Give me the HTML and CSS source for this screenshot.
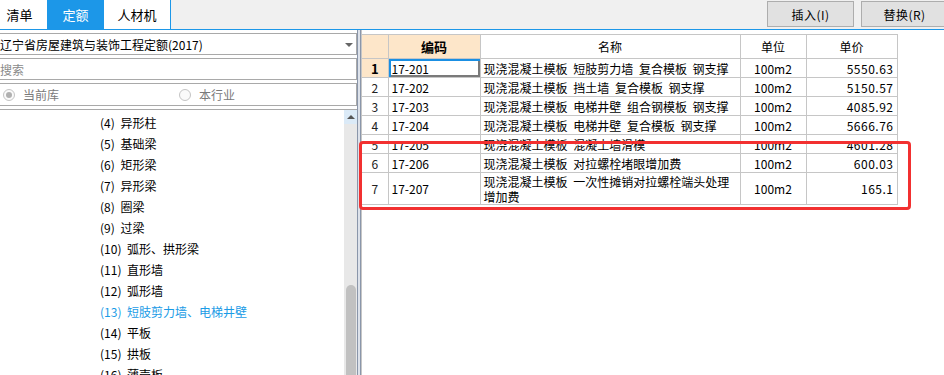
FILE: index.html
```html
<!DOCTYPE html>
<html lang="zh-CN">
<head>
    <meta charset="UTF-8">
    <meta name="viewport" content="width=device-width, initial-scale=1.0">
    <title>定额查询</title>
    <link rel="stylesheet" href="styles.css">
</head>
<body>
    <div class="app">
        <div class="topbar">
            <div class="tabs">
                <div class="tab tab-first">清单</div>
                <div class="tab active">定额</div>
                <div class="tab tab-last">人材机</div>
            </div>
            <div class="actions">
                <button class="btn">插入(I)</button>
                <button class="btn">替换(R)</button>
            </div>
        </div>

        <div class="main">
            <div class="left">
                <div class="select">
                    <span class="select-text">辽宁省房屋建筑与装饰工程定额(2017)</span>
                    <span class="caret"></span>
                </div>
                <div class="search">搜索</div>
                <div class="scope">
                    <span class="radio checked"><span class="circle"></span>当前库</span>
                    <span class="radio"><span class="circle"></span>本行业</span>
                </div>
                <div class="tree">
                    <ul class="tree-list">
                        <li>(4) 异形柱</li>
                        <li>(5) 基础梁</li>
                        <li>(6) 矩形梁</li>
                        <li>(7) 异形梁</li>
                        <li>(8) 圈梁</li>
                        <li>(9) 过梁</li>
                        <li>(10) 弧形、拱形梁</li>
                        <li>(11) 直形墙</li>
                        <li>(12) 弧形墙</li>
                        <li class="current">(13) 短肢剪力墙、电梯井壁</li>
                        <li>(14) 平板</li>
                        <li>(15) 拱板</li>
                        <li>(16) 薄壳板</li>
                    </ul>
                    <div class="scrollbar">
                        <div class="sb-up"></div>
                        <div class="sb-thumb"></div>
                    </div>
                </div>
            </div>

            <div class="splitter"></div>

            <div class="right">
                <table class="grid">
                    <colgroup>
                        <col style="width: 26px">
                        <col style="width: 92px">
                        <col style="width: 260px">
                        <col style="width: 66px">
                        <col style="width: 91px">
                    </colgroup>
                    <thead>
                        <tr>
                            <th class="num peach"></th>
                            <th class="peach code-head">编码</th>
                            <th>名称</th>
                            <th>单位</th>
                            <th>单价</th>
                        </tr>
                    </thead>
                    <tbody>
                        <tr>
                            <td class="num peach cur">1</td>
                            <td class="code focused">17-201</td>
                            <td>现浇混凝土模板 短肢剪力墙 复合模板 钢支撑</td>
                            <td class="unit">100m2</td>
                            <td class="price">5550.63</td>
                        </tr>
                        <tr>
                            <td class="num">2</td>
                            <td class="code">17-202</td>
                            <td>现浇混凝土模板 挡土墙 复合模板 钢支撑</td>
                            <td class="unit">100m2</td>
                            <td class="price">5150.57</td>
                        </tr>
                        <tr>
                            <td class="num">3</td>
                            <td class="code">17-203</td>
                            <td>现浇混凝土模板 电梯井壁 组合钢模板 钢支撑</td>
                            <td class="unit">100m2</td>
                            <td class="price">4085.92</td>
                        </tr>
                        <tr>
                            <td class="num">4</td>
                            <td class="code">17-204</td>
                            <td>现浇混凝土模板 电梯井壁 复合模板 钢支撑</td>
                            <td class="unit">100m2</td>
                            <td class="price">5666.76</td>
                        </tr>
                        <tr>
                            <td class="num">5</td>
                            <td class="code">17-205</td>
                            <td>现浇混凝土模板 混凝土墙滑模</td>
                            <td class="unit">100m2</td>
                            <td class="price">4601.28</td>
                        </tr>
                        <tr>
                            <td class="num">6</td>
                            <td class="code">17-206</td>
                            <td>现浇混凝土模板 对拉螺栓堵眼增加费</td>
                            <td class="unit">100m2</td>
                            <td class="price">600.03</td>
                        </tr>
                        <tr class="tall">
                            <td class="num">7</td>
                            <td class="code">17-207</td>
                            <td class="wrap">现浇混凝土模板 一次性摊销对拉螺栓端头处理<br>增加费</td>
                            <td class="unit">100m2</td>
                            <td class="price">165.1</td>
                        </tr>
                    </tbody>
                </table>
                <div class="highlight"></div>
            </div>
        </div>
    </div>
</body>
</html>
```

FILE: styles.css
```css
body, html {
    margin: 0;
    padding: 0;
    width: 944px;
    height: 375px;
    overflow: hidden;
    background-color: #fff;
    font-family: "Noto Sans CJK SC", "Liberation Sans", sans-serif;
    font-size: 12px;
    color: #000;
    word-spacing: 3px;
}

.app {
    display: flex;
    flex-direction: column;
    height: 375px;
}

/* barre du haut : onglets + boutons */
.topbar {
    display: flex;
    justify-content: space-between;
    height: 29px;
    background-color: #f0f0f0;
    border-bottom: 1px solid #1c97e8;
    flex-shrink: 0;
}

.tabs {
    display: flex;
}

.tab {
    display: flex;
    align-items: center;
    justify-content: center;
    background-color: #fff;
    font-size: 13px;
    width: 57px;
}

.tab-first {
    width: 55px;
    margin-left: -8px;
}

.tab-last {
    width: 66px;
    border-right: 1px solid #1c97e8;
}

.tab.active {
    background-color: #1c97e8;
    color: #fff;
}

.actions {
    display: flex;
    gap: 7px;
    padding-top: 1px;
    margin-right: -4px;
}

.btn {
    width: 87px;
    height: 26px;
    background-color: #e1e1e1;
    border: 1px solid #adadad;
    font-family: inherit;
    font-size: 12px;
    color: #000;
    padding: 0;
    letter-spacing: 0.5px;
}

/* zone principale */
.main {
    display: flex;
    flex: 1;
    min-height: 0;
}

.left {
    width: 359px;
    margin-left: -2px;
    display: flex;
    flex-direction: column;
    gap: 3px;
    padding-top: 3px;
    flex-shrink: 0;
}

.select,
.search,
.scope {
    box-sizing: border-box;
    border: 1px solid #a9a9a9;
    display: flex;
    align-items: center;
    padding-left: 1px;
}

.select {
    height: 22px;
    justify-content: space-between;
}

.caret {
    width: 0;
    height: 0;
    border-left: 4px solid transparent;
    border-right: 4px solid transparent;
    border-top: 4px solid #666;
    margin-right: 3px;
    margin-top: 1px;
}

.search {
    height: 22px;
    color: #8a8a8a;
}

.scope {
    height: 23px;
    padding-left: 4px;
    color: #7a7a7a;
}

.radio {
    display: flex;
    align-items: center;
    gap: 8px;
    width: 176px;
}

.circle {
    box-sizing: border-box;
    width: 12px;
    height: 12px;
    border-radius: 50%;
    border: 1px solid #c4c4c4;
    background-color: #fafafa;
    position: relative;
}

.radio.checked .circle::before {
    content: '';
    position: absolute;
    top: 2px;
    left: 2px;
    width: 6px;
    height: 6px;
    border-radius: 50%;
    background-color: #b0b0b0;
}

.tree {
    flex: 1;
    min-height: 0;
    border-top: 1px solid #a9a9a9;
    display: flex;
    overflow: hidden;
}

.tree-list {
    list-style: none;
    margin: 0;
    padding: 2px 0 0 102px;
    flex: 1;
}

.tree-list li {
    height: 21px;
    line-height: 21px;
    white-space: nowrap;
}

.tree-list li.current {
    color: #1a9be6;
}

.scrollbar {
    width: 13px;
    background-color: #e8e8e8;
    display: flex;
    flex-direction: column;
    align-items: center;
}

.sb-up {
    width: 13px;
    height: 14px;
    background-color: #dbeaf7;
    position: relative;
    flex-shrink: 0;
}

.sb-up::before {
    content: '';
    position: absolute;
    top: 5px;
    left: 3px;
    border-left: 4px solid transparent;
    border-right: 4px solid transparent;
    border-bottom: 4px solid #555;
}

.sb-thumb {
    width: 10px;
    height: 120px;
    margin-top: 161px;
    background-color: #c1c1c1;
    border-radius: 5px 5px 0 0;
    flex-shrink: 0;
}

/* séparateur entre les deux volets */
.splitter {
    width: 2px;
    background-color: #dde2ea;
    border-left: 1px solid #8a96aa;
    border-right: 1px solid #8a96aa;
    flex-shrink: 0;
}

.right {
    flex: 1;
    position: relative;
    border-left: 1px solid #c6c6c6;
    padding-top: 4px;
}

.grid {
    border-collapse: collapse;
    table-layout: fixed;
    width: 535px;
    font-size: 12px;
}

.grid th,
.grid td {
    border: 1px solid #c6c6c6;
    padding: 0 3px;
    white-space: nowrap;
    overflow: hidden;
    line-height: 15px;
}

.grid th:first-child,
.grid td:first-child {
    border-left: none;
}

.grid thead tr {
    height: 24px;
}

.grid th {
    font-weight: normal;
    font-size: 12px;
}

.grid th.code-head {
    font-weight: bold;
    font-size: 13px;
}

.grid tbody tr {
    height: 19px;
}

.grid tbody tr.tall {
    height: 32px;
}

.peach {
    background-color: #fde6c9;
}

.num {
    text-align: center;
    color: #222;
    padding: 0;
}

.num.cur {
    font-weight: bold;
    font-size: 13px;
    color: #000;
}

.code {
    padding-left: 4px;
}

.focused {
    box-shadow: inset 2px 2px 0 #1a8fe3, inset -2px -2px 0 #7a7a7a;
}

.unit {
    text-align: center;
}

.price {
    text-align: right;
    letter-spacing: 0.5px;
}

.wrap {
    white-space: normal;
}

/* cadre rouge d'annotation, posé par-dessus la grille */
.highlight {
    position: absolute;
    left: -3px;
    top: 111px;
    width: 552px;
    height: 69px;
    box-sizing: border-box;
    border: 3px solid #f23030;
    border-radius: 4px;
}
```
